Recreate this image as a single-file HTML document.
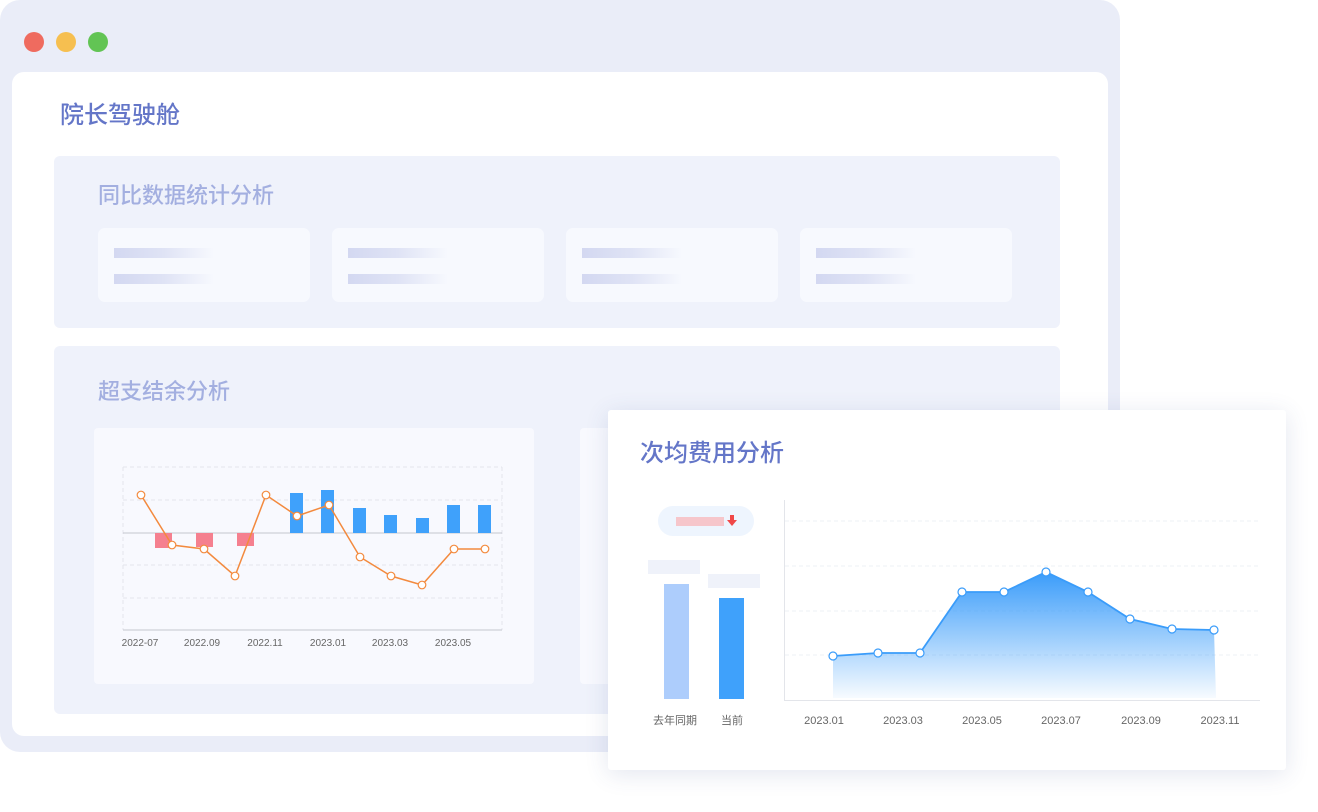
<!DOCTYPE html>
<html><head><meta charset="utf-8"><style>
*{margin:0;padding:0;box-sizing:border-box}
body{width:1318px;height:812px;background:#fff;position:relative;overflow:hidden;font-family:"Liberation Sans","Noto Sans CJK SC",sans-serif}
.a{position:absolute}
.bar{position:absolute;height:10px;width:100px;background:linear-gradient(90deg,#d3d8f1 0%,#dfe3f5 50%,rgba(240,243,251,0) 100%)}
</style></head><body>
<div class="a" style="left:0;top:0;width:1120px;height:752px;background:#eaedf8;border-radius:20px"></div>
<div class="a" style="left:24px;top:32px;width:20px;height:20px;border-radius:50%;background:#ef6b5f"></div>
<div class="a" style="left:56px;top:32px;width:20px;height:20px;border-radius:50%;background:#f6bf50"></div>
<div class="a" style="left:88px;top:32px;width:20px;height:20px;border-radius:50%;background:#62c454"></div>
<div class="a" style="left:12px;top:72px;width:1096px;height:664px;background:#fff;border-radius:12px"></div>
<div class="a" style="left:60px;top:101px;font-size:24px;font-weight:500;color:#6476c8;line-height:30px">院长驾驶舱</div>
<div class="a" style="left:54px;top:156px;width:1006px;height:172px;background:#eff2fb;border-radius:6px"></div>
<div class="a" style="left:98px;top:182px;font-size:22px;font-weight:500;color:#a3afe0;line-height:28px">同比数据统计分析</div>
<div class="a" style="left:98px;top:228px;width:212px;height:74px;background:#f7f9fe;border-radius:7px"></div>
<div class="a" style="left:332px;top:228px;width:212px;height:74px;background:#f7f9fe;border-radius:7px"></div>
<div class="a" style="left:566px;top:228px;width:212px;height:74px;background:#f7f9fe;border-radius:7px"></div>
<div class="a" style="left:800px;top:228px;width:212px;height:74px;background:#f7f9fe;border-radius:7px"></div>
<div class="bar" style="left:114px;top:248px"></div><div class="bar" style="left:114px;top:274px"></div>
<div class="bar" style="left:348px;top:248px"></div><div class="bar" style="left:348px;top:274px"></div>
<div class="bar" style="left:582px;top:248px"></div><div class="bar" style="left:582px;top:274px"></div>
<div class="bar" style="left:816px;top:248px"></div><div class="bar" style="left:816px;top:274px"></div>
<div class="a" style="left:54px;top:346px;width:1006px;height:368px;background:#eff2fb;border-radius:6px"></div>
<div class="a" style="left:98px;top:378px;font-size:22px;font-weight:500;color:#a3afe0;line-height:28px">超支结余分析</div>
<div class="a" style="left:94px;top:428px;width:440px;height:256px;background:#f8f9fe;border-radius:4px"></div>
<div class="a" style="left:580px;top:428px;width:440px;height:256px;background:#f8f9fe;border-radius:4px"></div>
<svg class="a" style="left:0;top:0" width="1318" height="812">
<g stroke="#e3e5ec" stroke-dasharray="4 3" fill="none">
<line x1="123" y1="467" x2="502" y2="467"/><line x1="123" y1="500" x2="502" y2="500"/><line x1="123" y1="565" x2="502" y2="565"/><line x1="123" y1="598" x2="502" y2="598"/>
<line x1="123" y1="467" x2="123" y2="630"/><line x1="502" y1="467" x2="502" y2="630"/></g>
<line x1="123" y1="533" x2="502" y2="533" stroke="#c4c6ce"/><line x1="123" y1="630" x2="502" y2="630" stroke="#c4c6ce"/>
<g fill="#f5808f"><rect x="155" y="533" width="17" height="15"/><rect x="196" y="533" width="17" height="14"/><rect x="237" y="533" width="17" height="13"/></g>
<g fill="#3fa1fb"><rect x="290" y="493" width="13" height="40"/><rect x="321" y="490" width="13" height="43"/><rect x="353" y="508" width="13" height="25"/><rect x="384" y="515" width="13" height="18"/><rect x="416" y="518" width="13" height="15"/><rect x="447" y="505" width="13" height="28"/><rect x="478" y="505" width="13" height="28"/></g>
<polyline fill="none" stroke="#f38a3e" stroke-width="1.5" points="141,495 172,545 204,549 235,576 266,495 297,516 329,505 360,557 391,576 422,585 454,549 485,549"/>
<g fill="#fff" stroke="#f38a3e" stroke-width="1.2"><circle cx="141" cy="495" r="3.8"/><circle cx="172" cy="545" r="3.8"/><circle cx="204" cy="549" r="3.8"/><circle cx="235" cy="576" r="3.8"/><circle cx="266" cy="495" r="3.8"/><circle cx="297" cy="516" r="3.8"/><circle cx="329" cy="505" r="3.8"/><circle cx="360" cy="557" r="3.8"/><circle cx="391" cy="576" r="3.8"/><circle cx="422" cy="585" r="3.8"/><circle cx="454" cy="549" r="3.8"/><circle cx="485" cy="549" r="3.8"/></g>
<g font-size="10" fill="#666" text-anchor="middle" font-family="Liberation Sans,sans-serif"><text x="140" y="646">2022-07</text><text x="202" y="646">2022.09</text><text x="265" y="646">2022.11</text><text x="328" y="646">2023.01</text><text x="390" y="646">2023.03</text><text x="453" y="646">2023.05</text></g>
</svg>
<div class="a" style="left:608px;top:410px;width:678px;height:360px;background:#fff;border-radius:3px;box-shadow:0 4px 24px rgba(60,80,140,0.14)"></div>
<div class="a" style="left:640px;top:439px;font-size:24px;font-weight:500;color:#6476c8;line-height:30px">次均费用分析</div>
<div class="a" style="left:658px;top:506px;width:96px;height:30px;background:#eef5fe;border-radius:15px"></div>
<div class="a" style="left:676px;top:517px;width:48px;height:9px;background:#f6c6cb"></div>
<div class="a" style="left:648px;top:560px;width:52px;height:14px;background:#eff2fa"></div>
<div class="a" style="left:708px;top:574px;width:52px;height:14px;background:#eff2fa"></div>
<div class="a" style="left:664px;top:584px;width:25px;height:115px;background:#adcdfc"></div>
<div class="a" style="left:719px;top:598px;width:25px;height:101px;background:#3fa1fb"></div>
<svg class="a" style="left:0;top:0" width="1318" height="812">
<path d="M730 515h4v5h3l-5 6-5-6h3z" fill="#f04848"/>
<defs><linearGradient id="g" x1="0" y1="0" x2="0" y2="1"><stop offset="0" stop-color="#3a9cfa"/><stop offset="1" stop-color="#3a9cfa" stop-opacity="0.04"/></linearGradient></defs>
<g stroke="#eef0f4" stroke-dasharray="4 3"><line x1="785" y1="521" x2="1258" y2="521"/><line x1="785" y1="566" x2="1258" y2="566"/><line x1="785" y1="611" x2="1258" y2="611"/><line x1="785" y1="655" x2="1258" y2="655"/></g>
<line x1="784.5" y1="500" x2="784.5" y2="700" stroke="#e3e5ea"/><line x1="784" y1="700.5" x2="1260" y2="700.5" stroke="#e3e5ea"/>
<path d="M833 656L878 653L920 653L962 592L1004 592L1046 572L1088 592L1130 619L1172 629L1214 630L1216 698L833 698Z" fill="url(#g)"/>
<polyline fill="none" stroke="#3a9cfa" stroke-width="1.8" points="833,656 878,653 920,653 962,592 1004,592 1046,572 1088,592 1130,619 1172,629 1214,630"/>
<g fill="#fff" stroke="#3a9cfa" stroke-width="1.2"><circle cx="833" cy="656" r="4"/><circle cx="878" cy="653" r="4"/><circle cx="920" cy="653" r="4"/><circle cx="962" cy="592" r="4"/><circle cx="1004" cy="592" r="4"/><circle cx="1046" cy="572" r="4"/><circle cx="1088" cy="592" r="4"/><circle cx="1130" cy="619" r="4"/><circle cx="1172" cy="629" r="4"/><circle cx="1214" cy="630" r="4"/></g>
<g font-size="11" fill="#666" text-anchor="middle" font-family="Liberation Sans,'Noto Sans CJK SC',sans-serif"><text x="824" y="724">2023.01</text><text x="903" y="724">2023.03</text><text x="982" y="724">2023.05</text><text x="1061" y="724">2023.07</text><text x="1141" y="724">2023.09</text><text x="1220" y="724">2023.11</text><text x="675" y="724">去年同期</text><text x="732" y="724">当前</text></g>
</svg>
</body></html>
